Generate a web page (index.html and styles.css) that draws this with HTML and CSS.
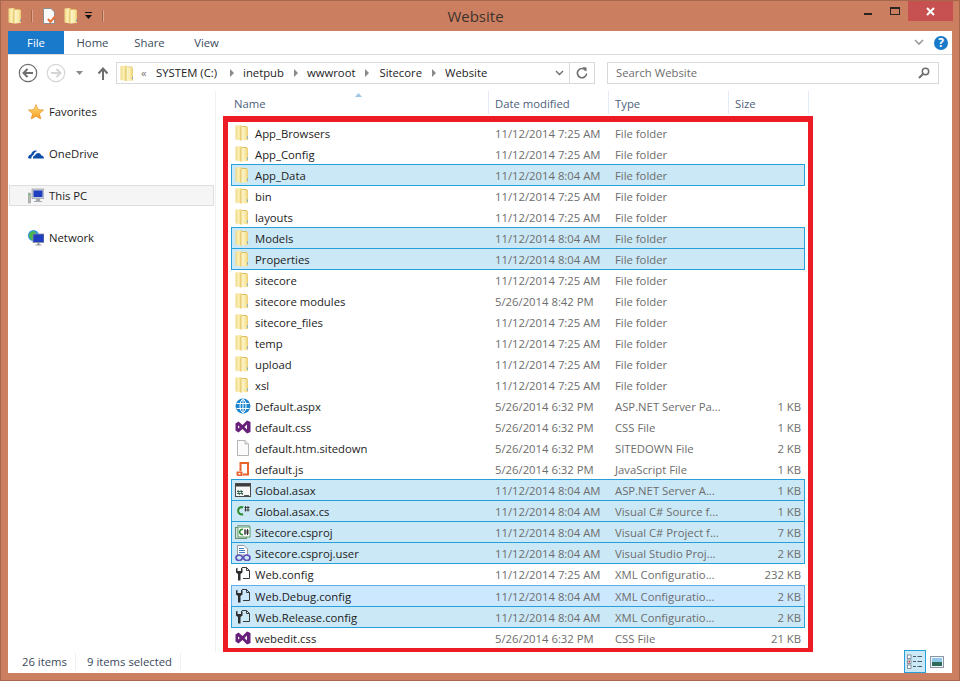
FILE: index.html
```html
<!DOCTYPE html>
<html>
    <head>
        <title>Website</title>
        <meta charset="utf-8">
        <link rel="stylesheet" href="styles.css">
    </head>
    <body>
        <svg class="sprite" xmlns="http://www.w3.org/2000/svg">
            <defs>
                <linearGradient id="folderLeft" x1="0" y1="0" x2="1" y2="0">
                    <stop offset="0" stop-color="#efd681"/>
                    <stop offset="0.5" stop-color="#fbf0b4"/>
                    <stop offset="1" stop-color="#f0d57c"/>
                </linearGradient>
                <linearGradient id="folderFront" x1="0" y1="0" x2="1" y2="0">
                    <stop offset="0" stop-color="#fdf6cf"/>
                    <stop offset="0.6" stop-color="#f9ebaa"/>
                    <stop offset="1" stop-color="#ebcb70"/>
                </linearGradient>
                <linearGradient id="starFill" x1="0" y1="0" x2="0" y2="1">
                    <stop offset="0" stop-color="#ffe27a"/>
                    <stop offset="1" stop-color="#f59a22"/>
                </linearGradient>
                <symbol id="i-folder" viewBox="0 0 16 16">
                    <path d="M0.5 0.5 L6.5 0 V15.5 L0.5 14.5 Z" fill="url(#folderLeft)"/>
                    <path d="M6.5 1 H12 V2 H6.5 Z" fill="#dfbd62"/>
                    <path d="M6 2 H13 V15 L6 15.5 Z" fill="url(#folderFront)"/>
                    <path d="M6 2 V15.5" stroke="#dcb95a" stroke-width="0.8"/>
                    <path d="M12 11.5 h1 v2 h-1 Z" fill="#6fa8d8"/>
                </symbol>
                <symbol id="i-web" viewBox="0 0 16 16">
                    <circle cx="8" cy="8" r="7.5" fill="#1c87d0"/>
                    <g fill="none" stroke="#fff" stroke-width="1">
                        <ellipse cx="8" cy="8" rx="3" ry="6.5"/>
                        <path d="M1.5 5.5 H14.5 M1.5 10.5 H14.5 M8 1.5 V14.5"/>
                    </g>
                </symbol>
                <symbol id="i-vs" viewBox="0 0 16 16">
                    <path d="M0.5 4.5 L3.5 2.5 L7.5 6 L12 1.5 L15.5 3 V13 L12 14.5 L7.5 10 L3.5 13.5 L0.5 11.5 Z M3 6.5 V9.5 L4.8 8 Z M12 5.5 L9.5 8 L12 10.5 Z" fill="#68217a" fill-rule="evenodd"/>
                </symbol>
                <symbol id="i-blank" viewBox="0 0 16 16">
                    <path d="M2.5 0.5 H10 L13.5 4 V15.5 H2.5 Z" fill="#fbfbfb" stroke="#b4b4b4"/>
                    <path d="M10 0.5 V4 H13.5" fill="#e8e8e8" stroke="#b4b4b4"/>
                </symbol>
                <symbol id="i-js" viewBox="0 0 16 16">
                    <path d="M5.5 10 V2 H13 V13.5 H8" fill="none" stroke="#e8622c" stroke-width="2"/>
                    <path d="M1.5 10.5 H7.5 V15 H2.5 L1.5 14 Z" fill="#e8622c"/>
                    <path d="M3.5 12 H5.5 V13.5 H3.5 Z" fill="#fff"/>
                </symbol>
                <symbol id="i-asax" viewBox="0 0 16 16">
                    <rect x="0.5" y="1.5" width="15" height="13" fill="#f6f6f6" stroke="#4a4a4a"/>
                    <rect x="1" y="2" width="14" height="2.5" fill="#3c3c3c"/>
                    <path d="M3 8 L4.5 13 M6 8 L7.5 13 M2 9.5 H8 M2 11.5 H8" stroke="#2f5a4a" stroke-width="0.9" fill="none"/>
                    <path d="M9 13.5 H14" stroke="#555"/>
                </symbol>
                <symbol id="i-cs" viewBox="0 0 16 16">
                    <path d="M8 4.5 A3.4 3.6 0 1 0 8 11" fill="none" stroke="#2e8b2e" stroke-width="2"/>
                    <path d="M10.5 3 V8.5 M13 3 V8.5 M9.5 4.5 H14.5 M9.5 7 H14.5" stroke="#3c3c3c" stroke-width="1"/>
                </symbol>
                <symbol id="i-csproj" viewBox="0 0 16 16">
                    <rect x="0.5" y="3.5" width="11" height="11" fill="#cfe3d2" stroke="#6a8f7a"/>
                    <path d="M2 1.5 H14.5 V12" fill="none" stroke="#8aa89a"/>
                    <rect x="3" y="3" width="12" height="10" fill="#fff" stroke="#5a9a6a"/>
                    <path d="M8 5.5 A2.6 2.6 0 1 0 8 10.5" fill="none" stroke="#2e8b2e" stroke-width="1.6"/>
                    <path d="M10 5 V11 M12.5 5 V11 M9 7 H14 M9 9 H14" stroke="#222" stroke-width="0.9"/>
                </symbol>
                <symbol id="i-user" viewBox="0 0 16 16">
                    <path d="M2.5 0.5 H9 L12.5 4 V10 H2.5 Z" fill="#fff" stroke="#9a9a9a"/>
                    <path d="M4 3.5 H9 M4 5.5 H10 M4 7.5 H10" stroke="#3f7fc4"/>
                    <path d="M4.5 10 C2.5 10 1 11.2 1 12.7 S2.5 15.5 4.5 15.5 C7.5 15.5 8.5 10 11.5 10 C13.5 10 15 11.2 15 12.7 S13.5 15.5 11.5 15.5 C8.5 15.5 7.5 10 4.5 10 Z" fill="none" stroke="#5a50b8" stroke-width="1.7"/>
                </symbol>
                <symbol id="i-config" viewBox="0 0 16 16">
                    <path d="M7 1.5 H11.5 L14.5 4.5 V12.5 H8" fill="none" stroke="#3a3a3a"/>
                    <path d="M11.5 1.5 V4.5 H14.5" fill="none" stroke="#3a3a3a"/>
                    <path d="M1 2.5 V6.5 L3 8 V14.5 H5.5 V8 L7.5 6.5 V2.5 L6 1.8 V5 H2.5 V1.8 Z" fill="#2e2e2e"/>
                </symbol>
                <symbol id="i-monitor" viewBox="0 0 16 16">
                    <rect x="4" y="1" width="12" height="9.5" fill="#c9ced6" stroke="#8a8f98" stroke-width="0.6"/>
                    <rect x="5.5" y="2.5" width="9" height="6.5" fill="#1f3fc0"/>
                    <path d="M8 11 H12 V13 H14 V14 H6 V13 H8 Z" fill="#a5a9b0"/>
                </symbol>
            </defs>
        </svg>

        <div class="window">
            <div class="titlebar">
                <div class="qat">
                    <svg class="ico"><use href="#i-folder"/></svg>
                    <span class="qat-sep"></span>
                    <svg class="ico qat-doc" viewBox="0 0 16 16">
                        <path d="M1.5 0.5 H9 L12.5 4 V15.5 H1.5 Z" fill="#fafafa" stroke="#8c8c8c"/>
                        <path d="M6 11 L8.5 14 L13 8.5" fill="none" stroke="#e8703a" stroke-width="2"/>
                    </svg>
                    <svg class="ico qat-new"><use href="#i-folder"/></svg>
                    <svg class="qat-drop" viewBox="0 0 8 8">
                        <path d="M0 0 H7 V1 H0 Z M0 3 H7 L3.5 7 Z" fill="#111"/>
                    </svg>
                    <span class="qat-sep qat-sep2"></span>
                </div>
                <div class="title">Website</div>
                <div class="controls">
                    <span class="ctl"><span class="ctl-min"></span></span>
                    <span class="ctl"><span class="ctl-max"></span></span>
                    <span class="ctl-close">
                        <svg viewBox="0 0 9 9" width="9" height="9"><path d="M1 1 L8 8 M8 1 L1 8" stroke="#fff" stroke-width="2"/></svg>
                    </span>
                </div>
            </div>

            <div class="main">
                <div class="ribbon">
                    <div class="tab-file">File</div>
                    <div class="tab">Home</div>
                    <div class="tab">Share</div>
                    <div class="tab">View</div>
                    <div class="ribbon-right">
                        <svg class="ribbon-chev" viewBox="0 0 10 7"><path d="M1 1 L5 5 L9 1" fill="none" stroke="#9a9a9a" stroke-width="1.6"/></svg>
                        <span class="help">?</span>
                    </div>
                </div>

                <div class="navbar">
                    <svg class="nav-btn" viewBox="0 0 20 20">
                        <circle cx="10" cy="10" r="8.7" fill="#fff" stroke="#6e6e6e" stroke-width="1.2"/>
                        <path d="M15 10 H6 M9.5 6 L5.5 10 L9.5 14" fill="none" stroke="#6e6e6e" stroke-width="2"/>
                    </svg>
                    <svg class="nav-btn nav-fwd" viewBox="0 0 20 20">
                        <circle cx="10" cy="10" r="8.7" fill="#fff" stroke="#d5d5d5" stroke-width="1.2"/>
                        <path d="M5 10 H14 M10.5 6 L14.5 10 L10.5 14" fill="none" stroke="#d5d5d5" stroke-width="2"/>
                    </svg>
                    <svg class="nav-drop" viewBox="0 0 8 5"><path d="M0 0 H7 L3.5 4 Z" fill="#8a8a8a"/></svg>
                    <svg class="nav-up" viewBox="0 0 12 13"><path d="M6 13 V2 M1.5 6.5 L6 1.5 L10.5 6.5" fill="none" stroke="#6e6e6e" stroke-width="2"/></svg>

                    <div class="address">
                        <svg class="ico addr-ico"><use href="#i-folder"/></svg>
                        <span class="addr-more">«</span>
                        <span class="crumb crumb-sys">SYSTEM (C:)</span>
                        <span class="arrow"></span>
                        <span class="crumb">inetpub</span>
                        <span class="arrow"></span>
                        <span class="crumb">wwwroot</span>
                        <span class="arrow"></span>
                        <span class="crumb crumb-site">Sitecore</span>
                        <span class="arrow"></span>
                        <span class="crumb">Website</span>
                        <svg class="addr-chev" viewBox="0 0 9 6"><path d="M1 1 L4.5 4.5 L8 1" fill="none" stroke="#6e6e6e" stroke-width="1.4"/></svg>
                    </div>
                    <div class="refresh">
                        <svg viewBox="0 0 12 12" width="12" height="12">
                            <path d="M9.8 3.5 A4.6 4.6 0 1 0 10.6 6.5" fill="none" stroke="#6e6e6e" stroke-width="1.6"/>
                            <path d="M6.5 0 L10.5 0.5 V4.5 Z" fill="#6e6e6e"/>
                        </svg>
                    </div>
                    <div class="search">
                        <span class="search-text">Search Website</span>
                        <svg viewBox="0 0 12 12" width="12" height="12">
                            <circle cx="7.5" cy="4.5" r="3.2" fill="none" stroke="#6e6e6e" stroke-width="1.5"/>
                            <path d="M5 7 L1 11" stroke="#6e6e6e" stroke-width="2"/>
                        </svg>
                    </div>
                </div>

                <div class="content">
                    <div class="navpane">
                        <div class="nav-item">
                            <svg class="ico" viewBox="0 0 16 16"><path d="M8 0.5 L10.2 5.5 L15.7 6 L11.5 9.6 L12.8 15 L8 12.2 L3.2 15 L4.5 9.6 L0.3 6 L5.8 5.5 Z" fill="url(#starFill)" stroke="#e58a1f" stroke-width="0.6"/></svg>
                            <span>Favorites</span>
                        </div>
                        <div class="nav-item">
                            <svg class="ico" viewBox="0 0 16 16"><path d="M0 12 C0 9.5 2 8.5 3 8.5 C4 5 7 3.5 9.5 5 C7.5 5.5 6 7 5.5 9 C4 9.5 3 11 3.5 12.5 H1 Z M5 12.5 C4.5 10.5 6 9.5 7 9.5 C8 6.5 12 6 13.3 9.5 C15 9.5 16 11 16 12.5 Z" fill="#0d4fa8"/></svg>
                            <span>OneDrive</span>
                        </div>
                        <div class="nav-item nav-this">
                            <svg class="ico" viewBox="0 0 16 16">
                                <use href="#i-monitor"/>
                                <rect x="0" y="5" width="2.5" height="10" fill="#b8bdb8" stroke="#777" stroke-width="0.4"/>
                                <rect x="0.6" y="6" width="1.3" height="1.5" fill="#5ed05e"/>
                            </svg>
                            <span>This PC</span>
                        </div>
                        <div class="nav-item">
                            <svg class="ico" viewBox="0 0 16 16">
                                <circle cx="5.5" cy="5.5" r="5.5" fill="#2f9be0"/>
                                <path d="M1.5 3 L6 0.5 L8 3.5 L5 6 L6 10 L3.5 10 L0.8 6.5 Z" fill="#46b84a"/>
                                <rect x="5" y="4" width="11" height="8.5" fill="#1f3fc0" stroke="#8a8f98" stroke-width="0.8"/>
                                <path d="M9.5 12.5 H11.5 V14.5 H13.5 V15.5 H7.5 V14.5 H9.5 Z" fill="#8f949c"/>
                            </svg>
                            <span>Network</span>
                        </div>
                    </div>

                    <div class="files">
                        <div class="header">
                            <svg class="sort" viewBox="0 0 7 4"><path d="M0 4 L3.5 0 L7 4 Z" fill="#9cc7e6"/></svg>
                            <div class="hcol hcol-name">Name</div>
                            <div class="hcol hcol-date">Date modified</div>
                            <div class="hcol hcol-type">Type</div>
                            <div class="hcol hcol-size">Size</div>
                        </div>
                        <div class="redbox">
                            <div class="row"><svg class="ico"><use href="#i-folder"/></svg><span class="name">App_Browsers</span><span class="cell">11/12/2014 7:25 AM</span><span class="cell">File folder</span><span class="cell size"></span></div>
                            <div class="row"><svg class="ico"><use href="#i-folder"/></svg><span class="name">App_Config</span><span class="cell">11/12/2014 7:25 AM</span><span class="cell">File folder</span><span class="cell size"></span></div>
                            <div class="row selected"><svg class="ico"><use href="#i-folder"/></svg><span class="name">App_Data</span><span class="cell">11/12/2014 8:04 AM</span><span class="cell">File folder</span><span class="cell size"></span></div>
                            <div class="row"><svg class="ico"><use href="#i-folder"/></svg><span class="name">bin</span><span class="cell">11/12/2014 7:25 AM</span><span class="cell">File folder</span><span class="cell size"></span></div>
                            <div class="row"><svg class="ico"><use href="#i-folder"/></svg><span class="name">layouts</span><span class="cell">11/12/2014 7:25 AM</span><span class="cell">File folder</span><span class="cell size"></span></div>
                            <div class="row selected"><svg class="ico"><use href="#i-folder"/></svg><span class="name">Models</span><span class="cell">11/12/2014 8:04 AM</span><span class="cell">File folder</span><span class="cell size"></span></div>
                            <div class="row selected"><svg class="ico"><use href="#i-folder"/></svg><span class="name">Properties</span><span class="cell">11/12/2014 8:04 AM</span><span class="cell">File folder</span><span class="cell size"></span></div>
                            <div class="row"><svg class="ico"><use href="#i-folder"/></svg><span class="name">sitecore</span><span class="cell">11/12/2014 7:25 AM</span><span class="cell">File folder</span><span class="cell size"></span></div>
                            <div class="row"><svg class="ico"><use href="#i-folder"/></svg><span class="name">sitecore modules</span><span class="cell">5/26/2014 8:42 PM</span><span class="cell">File folder</span><span class="cell size"></span></div>
                            <div class="row"><svg class="ico"><use href="#i-folder"/></svg><span class="name">sitecore_files</span><span class="cell">11/12/2014 7:25 AM</span><span class="cell">File folder</span><span class="cell size"></span></div>
                            <div class="row"><svg class="ico"><use href="#i-folder"/></svg><span class="name">temp</span><span class="cell">11/12/2014 7:25 AM</span><span class="cell">File folder</span><span class="cell size"></span></div>
                            <div class="row"><svg class="ico"><use href="#i-folder"/></svg><span class="name">upload</span><span class="cell">11/12/2014 7:25 AM</span><span class="cell">File folder</span><span class="cell size"></span></div>
                            <div class="row"><svg class="ico"><use href="#i-folder"/></svg><span class="name">xsl</span><span class="cell">11/12/2014 7:25 AM</span><span class="cell">File folder</span><span class="cell size"></span></div>
                            <div class="row"><svg class="ico"><use href="#i-web"/></svg><span class="name">Default.aspx</span><span class="cell">5/26/2014 6:32 PM</span><span class="cell">ASP.NET Server Pa...</span><span class="cell size">1 KB</span></div>
                            <div class="row"><svg class="ico"><use href="#i-vs"/></svg><span class="name">default.css</span><span class="cell">5/26/2014 6:32 PM</span><span class="cell">CSS File</span><span class="cell size">1 KB</span></div>
                            <div class="row"><svg class="ico"><use href="#i-blank"/></svg><span class="name">default.htm.sitedown</span><span class="cell">5/26/2014 6:32 PM</span><span class="cell">SITEDOWN File</span><span class="cell size">2 KB</span></div>
                            <div class="row"><svg class="ico"><use href="#i-js"/></svg><span class="name">default.js</span><span class="cell">5/26/2014 6:32 PM</span><span class="cell">JavaScript File</span><span class="cell size">1 KB</span></div>
                            <div class="row selected"><svg class="ico"><use href="#i-asax"/></svg><span class="name">Global.asax</span><span class="cell">11/12/2014 8:04 AM</span><span class="cell">ASP.NET Server A...</span><span class="cell size">1 KB</span></div>
                            <div class="row selected"><svg class="ico"><use href="#i-cs"/></svg><span class="name">Global.asax.cs</span><span class="cell">11/12/2014 8:04 AM</span><span class="cell">Visual C# Source f...</span><span class="cell size">1 KB</span></div>
                            <div class="row selected"><svg class="ico"><use href="#i-csproj"/></svg><span class="name">Sitecore.csproj</span><span class="cell">11/12/2014 8:04 AM</span><span class="cell">Visual C# Project f...</span><span class="cell size">7 KB</span></div>
                            <div class="row selected"><svg class="ico"><use href="#i-user"/></svg><span class="name">Sitecore.csproj.user</span><span class="cell">11/12/2014 8:04 AM</span><span class="cell">Visual Studio Proj...</span><span class="cell size">2 KB</span></div>
                            <div class="row"><svg class="ico"><use href="#i-config"/></svg><span class="name">Web.config</span><span class="cell">11/12/2014 7:25 AM</span><span class="cell">XML Configuratio...</span><span class="cell size">232 KB</span></div>
                            <div class="row selected hovered"><svg class="ico"><use href="#i-config"/></svg><span class="name">Web.Debug.config</span><span class="cell">11/12/2014 8:04 AM</span><span class="cell">XML Configuratio...</span><span class="cell size">2 KB</span></div>
                            <div class="row selected"><svg class="ico"><use href="#i-config"/></svg><span class="name">Web.Release.config</span><span class="cell">11/12/2014 8:04 AM</span><span class="cell">XML Configuratio...</span><span class="cell size">2 KB</span></div>
                            <div class="row"><svg class="ico"><use href="#i-vs"/></svg><span class="name">webedit.css</span><span class="cell">5/26/2014 6:32 PM</span><span class="cell">CSS File</span><span class="cell size">21 KB</span></div>
                        </div>
                    </div>
                </div>

                <div class="statusbar">
                    <span class="st st-items">26 items</span>
                    <span class="st st-sel">9 items selected</span>
                    <div class="views">
                        <span class="view view-on">
                            <svg viewBox="0 0 16 16" width="16" height="16">
                                <g fill="#fff" stroke="#6e7f8c" stroke-width="0.8">
                                    <rect x="0.5" y="1" width="3.5" height="3.5"/>
                                    <rect x="0.5" y="6" width="3.5" height="3.5"/>
                                    <rect x="0.5" y="11" width="3.5" height="3.5"/>
                                </g>
                                <rect x="1.5" y="7" width="1.5" height="1.5" fill="#c8342c"/>
                                <path d="M6 2.5 H9 M10.5 2.5 H15 M6 7.5 H9 M10.5 7.5 H15 M6 12.5 H9 M10.5 12.5 H15" stroke="#4a5a68"/>
                            </svg>
                        </span>
                        <span class="view">
                            <svg viewBox="0 0 14 12" width="14" height="12">
                                <rect x="0.5" y="0.5" width="13" height="11" fill="#f4f4f4" stroke="#8a97a8"/>
                                <rect x="2" y="2" width="10" height="4" fill="#8fc8e8"/>
                                <rect x="2" y="6" width="10" height="4" fill="#2e6a58"/>
                            </svg>
                        </span>
                    </div>
                </div>
            </div>
        </div>
    </body>
</html>
```

FILE: styles.css
```css
html, body {
    margin: 0;
    padding: 0;
}
body {
    font-family: "Open Sans", "Liberation Sans", sans-serif;
    font-size: 11.3px;
    color: #1c1c1c;
}
.sprite {
    display: block;
    width: 0;
    height: 0;
}
.ico {
    display: block;
    width: 16px;
    height: 16px;
    flex: none;
}
.window {
    box-sizing: border-box;
    width: 960px;
    height: 681px;
    background-color: #cc7f60;
    border: 1px solid #a8674d;
    display: flex;
    flex-direction: column;
    overflow: hidden;
}

/* title bar */
.titlebar {
    height: 30px;
    flex: none;
    display: flex;
}
.qat {
    display: flex;
    align-items: center;
    padding: 0 0 0 7px;
    height: 30px;
    width: 240px;
    box-sizing: border-box;
}
.qat-sep {
    width: 1px;
    height: 12px;
    margin-left: 7px;
    background-color: #a8674d;
    box-shadow: 1px 0 0 #dba58e;
}
.qat-doc {
    margin-left: 10px;
}
.qat-new {
    margin-left: 6px;
}
.qat-drop {
    width: 8px;
    height: 8px;
    margin-left: 5px;
}
.qat-sep2 {
    margin-left: 9px;
}
.title {
    flex: 1;
    text-align: center;
    font-size: 15px;
    line-height: 30px;
    color: #3d332e;
    padding-right: 8px;
}
.controls {
    display: flex;
    align-items: flex-start;
    width: 241px;
    justify-content: flex-end;
    padding-right: 6px;
    box-sizing: border-box;
}
.ctl {
    width: 27px;
    height: 20px;
    display: flex;
    align-items: center;
    justify-content: center;
}
.ctl-min {
    width: 8px;
    height: 2px;
    margin-top: 6px;
    background-color: #2a2320;
}
.ctl-max {
    width: 8px;
    height: 5px;
    border: 1px solid #2a2320;
    border-top-width: 2px;
}
.ctl-close {
    width: 45px;
    height: 20px;
    background-color: #c75050;
    display: flex;
    align-items: center;
    justify-content: center;
}

/* main area */
.main {
    flex: 1;
    margin: 0 7px 7px 7px;
    background-color: #fff;
    display: flex;
    flex-direction: column;
    min-height: 0;
}
.ribbon {
    height: 23px;
    flex: none;
    display: flex;
    border-bottom: 1px solid #dadbdc;
    line-height: 23px;
    color: #3b4a5c;
}
.tab-file {
    width: 56px;
    background-color: #1979ca;
    color: #fff;
    text-align: center;
}
.tab {
    width: 57px;
    text-align: center;
}
.ribbon-right {
    flex: 1;
    display: flex;
    justify-content: flex-end;
    align-items: center;
    padding-right: 4px;
}
.ribbon-chev {
    width: 10px;
    height: 7px;
    margin-right: 10px;
}
.help {
    width: 14px;
    height: 14px;
    border-radius: 50%;
    background-color: #1979ca;
    color: #fff;
    font-weight: bold;
    font-size: 12px;
    line-height: 14px;
    text-align: center;
}
.navbar {
    height: 36px;
    flex: none;
    display: flex;
    align-items: center;
    padding: 0 12px 0 10px;
}
.nav-btn {
    width: 20px;
    height: 20px;
}
.nav-fwd {
    margin-left: 8px;
}
.nav-drop {
    width: 8px;
    height: 5px;
    margin-left: 10px;
}
.nav-up {
    width: 12px;
    height: 13px;
    margin-left: 13px;
}
.address {
    box-sizing: border-box;
    height: 22px;
    width: 453px;
    margin-left: 7px;
    border: 1px solid #d9d9d9;
    border-right: 0;
    display: flex;
    align-items: center;
    padding: 0 0 2px 3px;
}
.addr-ico {
    width: 16px;
    height: 17px;
    margin-top: 2px;
}
.addr-more {
    margin-left: 5px;
    color: #777;
    width: 15px;
}
.crumb-sys {
    margin-right: 3px;
}
.crumb-site {
    margin-left: 1px;
}
.arrow {
    width: 0;
    height: 0;
    margin: 2px 9px 0 10px;
    border-left: 4px solid #8a8a8a;
    border-top: 4px solid transparent;
    border-bottom: 4px solid transparent;
}
.addr-chev {
    width: 9px;
    height: 6px;
    margin: 2px 5px 0 auto;
}
.refresh {
    box-sizing: border-box;
    width: 26px;
    height: 22px;
    border: 1px solid #d9d9d9;
    display: flex;
    align-items: center;
    justify-content: center;
}
.search {
    box-sizing: border-box;
    width: 332px;
    height: 22px;
    margin-left: 12px;
    border: 1px solid #d9d9d9;
    display: flex;
    align-items: center;
    justify-content: space-between;
    padding: 0 8px 0 8px;
    color: #6d6d6d;
}
.search-text {
    margin-bottom: 2px;
}

/* nav pane and list */
.content {
    flex: 1;
    display: flex;
    min-height: 0;
}
.navpane {
    box-sizing: border-box;
    width: 208px;
    flex: none;
    padding: 10px 1px 0 1px;
    border-right: 1px solid #f0f0f0;
    display: flex;
    flex-direction: column;
    gap: 21px;
}
.nav-item {
    box-sizing: border-box;
    height: 21px;
    display: flex;
    align-items: center;
    gap: 5px;
    padding-left: 18px;
    border: 1px solid transparent;
}
.nav-this {
    background-color: #f5f5f5;
    border-color: #dedede;
}
.files {
    flex: 1;
    min-width: 0;
}
.header {
    height: 25px;
    display: flex;
    position: relative;
    color: #4c607a;
    line-height: 25px;
}
.sort {
    position: absolute;
    left: 139px;
    top: 2px;
    width: 7px;
    height: 4px;
}
.hcol {
    box-sizing: border-box;
    height: 23px;
    padding-left: 6px;
    border-right: 1px solid #e3ecf6;
}
.hcol-name {
    width: 273px;
    padding-left: 18px;
}
.hcol-date {
    width: 120px;
}
.hcol-type {
    width: 120px;
}
.hcol-size {
    width: 80px;
}
.redbox {
    box-sizing: border-box;
    width: 590px;
    height: 536px;
    margin-left: 7px;
    border: 5px solid #ed1c24;
    border-top-width: 6px;
    border-bottom-width: 4px;
    padding: 0 3px;
    overflow: hidden;
}
.row {
    box-sizing: border-box;
    height: 22px;
    margin-bottom: -1px;
    border: 1px solid transparent;
    display: grid;
    grid-template-columns: 20px 240px 120px 113px 1fr;
    align-items: center;
    padding-left: 3px;
}
.row.selected {
    background-color: #cbe8f6;
    border-color: #26a0da;
}
.row.hovered {
    background-color: #cce8ff;
    border-color: #5fb0e8;
    margin-top: 1px;
}
.name {
    color: #1c1c1c;
}
.cell {
    color: #6d6d6d;
    white-space: nowrap;
}
.size {
    text-align: right;
    padding-right: 3px;
}

/* status bar */
.statusbar {
    height: 23px;
    flex: none;
    display: flex;
    align-items: center;
    color: #3b4a5c;
    margin-top: -2px;
}
.st {
    box-sizing: border-box;
    height: 17px;
    line-height: 17px;
    border-right: 1px solid #f0f0f0;
}
.st-items {
    width: 68px;
    padding-left: 14px;
}
.st-sel {
    width: 105px;
    padding-left: 11px;
}
.views {
    margin-left: auto;
    display: flex;
    align-items: center;
    height: 23px;
    padding-right: 8px;
}
.view {
    display: flex;
    align-items: center;
    justify-content: center;
    margin-left: 4px;
}
.view-on {
    box-sizing: border-box;
    width: 22px;
    height: 23px;
    background-color: #cbe8f6;
    border: 1px solid #26a0da;
}
```
